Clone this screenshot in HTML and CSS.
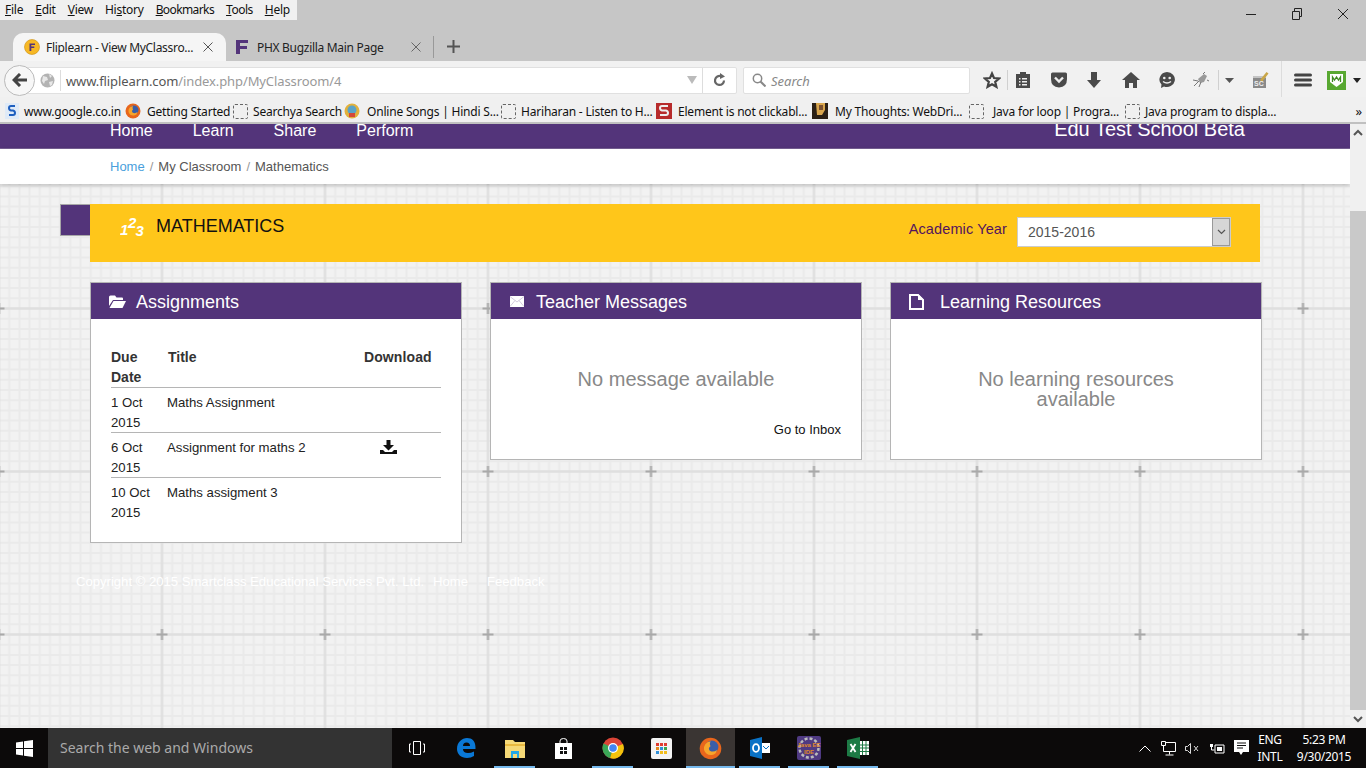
FILE: index.html
```html
<!DOCTYPE html>
<html lang="en">
<head>
<meta charset="utf-8">
<title>Fliplearn - View MyClassroom</title>
<link rel="stylesheet" href="styles.css">
</head>
<body>
<div class="titlebar">
  <nav class="menubar"><span><u>F</u>ile</span><span><u>E</u>dit</span><span><u>V</u>iew</span><span>Hi<u>s</u>tory</span><span><u>B</u>ookmarks</span><span><u>T</u>ools</span><span><u>H</u>elp</span></nav>
  <div class="winctl">
    <svg width="12" height="12" viewBox="0 0 12 12"><path d="M1 6.500h10" stroke="#222" fill="none"/></svg>
    <svg width="12" height="12" viewBox="0 0 12 12"><path d="M1.500 3.500h7v8h-7zM3.500 3.500v-3h7v8h-2" stroke="#222" fill="none"/></svg>
    <svg width="12" height="12" viewBox="0 0 12 12"><path d="M1 1l10 10M11 1L1 11" stroke="#222" fill="none"/></svg>
  </div>
</div>
<div class="tabstrip">
  <div class="tab active">
    <svg width="16" height="16" viewBox="0 0 16 16"><circle cx="8" cy="8" r="7.500" fill="#f7b825" stroke="#c98f10" stroke-width=".6"/><path d="M5.500 4.500h5.500v1.500H7.300v1.500h3v1.500h-3v3H5.500z" fill="#53347a"/></svg>
    <span class="tabtext">Fliplearn - View MyClassro...</span>
    <svg width="12" height="12" viewBox="0 0 12 12"><path d="M1.500 1.500l9 9M10.500 1.500l-9 9" stroke="#555" fill="none"/></svg>
  </div>
  <div class="tab second">
    <svg width="14" height="16" viewBox="0 0 14 16"><path d="M1 1h12v3H5v3h7v3H5v5H1z" fill="#53347a"/></svg>
    <span class="tabtext">PHX Bugzilla Main Page</span>
    <svg width="12" height="12" viewBox="0 0 12 12"><path d="M1.500 1.500l9 9M10.500 1.500l-9 9" stroke="#666" fill="none"/></svg>
  </div>
  <svg class="newtab" width="13" height="13" viewBox="0 0 13 13"><path d="M6.500 0v13M0 6.500h13" stroke="#555" stroke-width="2" fill="none"/></svg>
</div>
<div class="navbar">
  <div class="urlbar">
    <span class="backbtn"><svg width="16" height="14" viewBox="0 0 16 14"><path d="M8 1L2 7l6 6M2.500 7H15" stroke="#444" stroke-width="3" fill="none"/></svg></span>
    <svg class="globe" width="15" height="15" viewBox="0 0 15 15"><circle cx="7.500" cy="7.500" r="7" fill="#b3b3b3"/><path d="M3 3l4 1 1 3-3 1-1 3-2-3zM9 1l3 2-2 2zM9 9l4-1-1 4-2 1z" fill="#e8e8e8"/></svg>
    <span class="urltext"><b>www.fliplearn.com</b>/index.php/MyClassroom/4</span>
    <svg class="urlcaret" width="10" height="8" viewBox="0 0 10 8"><path d="M0 0h10L5 8z" fill="#bbb"/></svg>
    <span class="reload"><svg width="13" height="14" viewBox="0 0 13 14"><path d="M11 7.500A4.500 4.500 0 1 1 8 3.200" stroke="#666" stroke-width="2.200" fill="none"/><path d="M7 0l5 3.500L7 6z" fill="#666"/></svg></span>
  </div>
  <div class="searchbar">
    <svg width="14" height="14" viewBox="0 0 14 14"><circle cx="5.500" cy="5.500" r="4.200" stroke="#888" stroke-width="1.500" fill="none"/><path d="M8.500 8.500l5 5" stroke="#888" stroke-width="2" fill="none"/></svg>
    <i>Search</i>
  </div>
  <div class="tools">
    <svg width="18" height="18" viewBox="0 0 18 18"><path d="M9 2.500l2 4.500 5 .5-3.800 3.300 1.200 5L9 13.200l-4.400 2.600 1.200-5L2 7.500l5-.5z" fill="none" stroke="#444" stroke-width="2.200"/></svg>
    <i class="vsep"></i>
    <svg width="16" height="18" viewBox="0 0 16 18"><path d="M1 3h4V1h6v2h4v14H1z" fill="#4a4a4a"/><path d="M4 7h1.500v1.500H4zM7 7h5v1.500H7zM4 10h1.500v1.500H4zM7 10h5v1.500H7zM4 13h1.500v1.500H4zM7 13h5v1.500H7z" fill="#eee"/></svg>
    <svg width="18" height="16" viewBox="0 0 18 16"><path d="M1 2q0-1.500 1.500-1.500h13Q17 .5 17 2v5q0 8-8 8.500Q1 15 1 7z" fill="#4a4a4a"/><path d="M5 5.500l4 4 4-4" stroke="#eee" stroke-width="2.400" fill="none"/></svg>
    <svg width="16" height="18" viewBox="0 0 16 18"><path d="M5 1h6v8h4l-7 8-7-8h4z" fill="#4a4a4a"/></svg>
    <svg width="18" height="16" viewBox="0 0 18 16"><path d="M9 0l9 8h-3v8h-4v-5H7v5H3V8H0z" fill="#4a4a4a"/></svg>
    <svg width="18" height="18" viewBox="0 0 18 18"><path d="M9 1a8 7.500 0 1 1-3 14.500L3 17l.5-3.500A8 7.500 0 0 1 9 1z" fill="#4a4a4a"/><circle cx="6.300" cy="7" r="1.300" fill="#eee"/><circle cx="11.700" cy="7" r="1.300" fill="#eee"/><path d="M5 10.500q4 3 8 0" stroke="#eee" stroke-width="1.500" fill="none"/></svg>
    <svg class="bug" width="18" height="18" viewBox="0 0 18 18"><path d="M6 8l6-5 3 2-3 6-4 1z" fill="#999"/><path d="M2 15l5-5M1 9l5 1M7 16l2-5M11 3l2-2M15 9l2 1" stroke="#777" fill="none"/></svg>
    <i class="vsep"></i>
    <svg width="9" height="5" viewBox="0 0 9 5"><path d="M0 0h9L4.500 5z" fill="#555"/></svg>
    <svg width="17" height="18" viewBox="0 0 17 18"><path d="M1 5h13v12H1z" fill="#8a8a8a"/><path d="M1 5h13v2H1z" fill="#c4c4c4"/><path d="M8 9l6.500-8L16.500 2.500 10 11z" fill="#c9a648"/><text x="2" y="15" class="sc">SC</text></svg>
    <i class="vsep tall"></i>
    <svg width="18" height="14" viewBox="0 0 18 14"><path d="M1.500 2h15M1.500 7h15M1.500 12h15" stroke="#444" stroke-width="3" stroke-linecap="round" fill="none"/></svg>
    <svg width="19" height="19" viewBox="0 0 19 19"><path d="M0 0h19v19H0z" fill="#58a831"/><path d="M3 3h13v8l-6.500 5L3 11z" fill="#fff"/><path d="M5.500 11V6l2 3 2-3 2 3 2-3v5" stroke="#3f8a22" stroke-width="1.300" fill="none"/></svg>
    <svg width="8" height="5" viewBox="0 0 8 5"><path d="M0 0h8L4 5z" fill="#222"/></svg>
  </div>
</div>
<div class="bookmarks">
  <span class="bm"><svg width="14" height="16" viewBox="0 0 14 16"><path d="M0 0h14v16H0z" fill="#dfeaf7"/><path d="M10 3H6Q4 3 4 5t2 2.500h2q2 .5 2 2.500t-2 2H4" stroke="#1e5fbf" stroke-width="2" fill="none"/></svg>www.google.co.in</span>
  <span class="bm mid"><svg width="16" height="16" viewBox="0 0 16 16"><circle cx="8" cy="8" r="7.500" fill="#e8661c"/><circle cx="9" cy="7" r="4.500" fill="#3a5ea8"/><path d="M8 3Q3 4 3.500 9 5 13 9 12.500 12 12 12.500 9 10 11 7.500 9.500 6 8 8 6.500 7 5 8 3z" fill="#f7a52b"/></svg>Getting Started</span>
  <span class="bm"><i class="dash"></i>Searchya Search</span>
  <span class="bm wide"><svg width="16" height="16" viewBox="0 0 16 16"><circle cx="8" cy="8" r="7.500" fill="#e2b13c"/><circle cx="8" cy="7" r="4.500" fill="#5aa3c7"/><path d="M5 10h6v4H5z" fill="#d4473a"/></svg>Online Songs | Hindi S...</span>
  <span class="bm"><i class="dash"></i>Hariharan - Listen to H...</span>
  <span class="bm mid"><svg width="16" height="16" viewBox="0 0 16 16"><path d="M0 0h16v16H0z" fill="#b72b2b"/><path d="M12 3H6Q4 3 4 5t2 2.500h4q2 .5 2 2.500t-2 2H4" stroke="#eee" stroke-width="2" fill="none"/></svg>Element is not clickabl...</span>
  <span class="bm wide"><svg width="16" height="16" viewBox="0 0 16 16"><path d="M0 0h16v16H0z" fill="#2b2016"/><path d="M4 0h9v7l-3 5H5z" fill="#d9a64e"/><path d="M7 2h4v5H7z" fill="#7a5030"/></svg>My Thoughts: WebDri...</span>
  <span class="bm wider"><i class="dash"></i>Java for loop | Progra...</span>
  <span class="bm"><i class="dash"></i>Java program to displa...</span>
  <span class="chev">&raquo;</span>
</div>

<div class="viewport">
  <main class="page">
    <svg class="pattern" aria-hidden="true" width="1350" height="604">
      <defs>
        <pattern id="tile" width="163" height="163" patternUnits="userSpaceOnUse" x="-6.500" y="-1">
          <rect width="163" height="163" fill="#f2f2f2"/>
          <path d="M15.700 0v163M25.900 0v163M36.100 0v163M46.250 0v163M56.400 0v163M66.600 0v163M76.800 0v163M87 0v163M97.200 0v163M107.400 0v163M117.600 0v163M127.750 0v163M137.900 0v163M148.100 0v163M158.300 0v163M0 2.100h163M0 12.300h163M0 32.700h163M0 42.900h163M0 53.100h163M0 63.250h163M0 73.400h163M0 83.600h163M0 93.800h163M0 104h163M0 114.200h163M0 124.400h163M0 134.600h163M0 144.750h163M0 154.900h163" stroke="#eaeaea" stroke-width="2" fill="none"/>
          <path d="M5.500 0v163M0 22.500h163" stroke="#dfdfdf" stroke-width="2.500" fill="none"/>
          <path d="M5.500 17v11M0 22.500h11" stroke="#a9a9a9" stroke-width="2.200" fill="none"/>
        </pattern>
      </defs>
      <rect width="1350" height="604" fill="url(#tile)"/>
    </svg>
    <header class="sitehead">
      <nav class="mainnav"><a>Home</a><a>Learn</a><a>Share</a><a>Perform</a></nav>
      <div class="school">Edu Test School Beta</div>
    </header>
    <div class="crumbs"><a>Home</a><em>/</em><span>My Classroom</span><em>/</em><span>Mathematics</span></div>
    <div class="content">
      <section class="subject">
        <span class="flag"></span>
        <div class="subject-bar">
          <div class="subject-title">
            <svg class="onetwo" width="25" height="22" viewBox="0 0 25 22"><text x="0" y="20">1</text><text x="8" y="13">2</text><text x="15.500" y="21">3</text></svg>
            <h1>MATHEMATICS</h1>
          </div>
          <div class="year">
            <label>Academic Year</label>
            <div class="select"><span>2015-2016</span><b><svg width="9" height="6" viewBox="0 0 9 6"><path d="M1 1l3.500 3.500L8 1" stroke="#555" stroke-width="1.200" fill="none"/></svg></b></div>
          </div>
        </div>
      </section>
      <div class="cards">
        <article class="card">
          <h2><svg width="17" height="13" viewBox="0 0 17 13"><path d="M0 2q0-1.500 1.500-1.500H6L7.500 2.500H13q1 0 1 1V5H4L0 11z" fill="#fff"/><path d="M4.500 6H17l-3.500 7H.5z" fill="#fff"/></svg><span>Assignments</span></h2>
          <div class="card-body assign">
            <table>
              <thead><tr><th>Due<br>Date</th><th>Title</th><th>Download</th></tr></thead>
              <tbody>
                <tr><td>1 Oct<br>2015</td><td>Maths Assignment</td><td></td></tr>
                <tr><td>6 Oct<br>2015</td><td>Assignment for maths 2</td><td class="dl"><svg width="17" height="14" viewBox="0 0 17 14"><path d="M6.500 0h4v5H14l-5.500 5.500L3 5h3.500z" fill="#111"/><path d="M0 10h3l2 2h7l2-2h3v4H0z" fill="#111"/></svg></td></tr>
                <tr><td>10 Oct<br>2015</td><td>Maths assigment 3</td><td></td></tr>
              </tbody>
            </table>
          </div>
        </article>
        <article class="card">
          <h2><svg class="mail" width="14" height="11" viewBox="0 0 14 11"><path d="M0 0h14v11H0z" fill="#fff"/><path d="M0 .5l7 5.500 7-5.500M0 10.500l5-6M14 10.500l-5-6" stroke="#c9bfd6" stroke-width=".8" fill="none"/></svg><span>Teacher Messages</span></h2>
          <div class="card-body msg">
            <p class="empty">No message available</p>
            <a class="inbox">Go to Inbox</a>
          </div>
        </article>
        <article class="card">
          <h2><svg class="doc" width="15" height="16" viewBox="0 0 15 16"><path d="M1 1h8l5 5v9H1z" fill="none" stroke="#fff" stroke-width="2"/><path d="M9 0v6h6z" fill="#fff"/></svg><span>Learning Resources</span></h2>
          <div class="card-body msg">
            <p class="empty">No learning resources available</p>
          </div>
        </article>
      </div>
      <footer class="foot"><span>Copyright &copy; 2015 Smartclass Educational Services Pvt. Ltd.</span><a>Home</a><a>Feedback</a></footer>
    </div>
  </main>
  <aside class="scrollbar">
    <svg width="10" height="7" viewBox="0 0 10 7"><path d="M1 6l4-4 4 4" stroke="#555" stroke-width="2" fill="none"/></svg>
    <div class="thumb"></div>
    <svg width="10" height="7" viewBox="0 0 10 7"><path d="M1 1l4 4 4-4" stroke="#555" stroke-width="2" fill="none"/></svg>
  </aside>
</div>

<div class="taskbar">
  <span class="start"><svg width="17" height="17" viewBox="0 0 17 17"><path d="M0 2.500l7-1v6.500H0zM8 1.300L17 0v8H8zM0 9h7v6.500l-7-1zM8 9h9v8l-9-1.300z" fill="#fff"/></svg></span>
  <div class="cortana">Search the web and Windows</div>
  <div class="apps">
    <span><svg width="16" height="14" viewBox="0 0 16 14"><path d="M4.500 .5h7v13h-7zM2 3H.5v8H2M14 3h1.500v8H14" stroke="#fff" fill="none"/></svg></span>
    <span><svg width="20" height="20" viewBox="0 0 20 20"><path d="M1 11C1 4 6 0 11 0c5 0 9 3 8.500 11H7q0 4 5 4 3 0 6-1.500V18q-3 2-7 2C5 20 1 16 1 11zM7 8h7q0-3.500-3.500-3.500T7 8z" fill="#0a78d6"/></svg></span>
    <span class="run"><svg width="20" height="20" viewBox="0 0 20 20"><path d="M0 2h8l2 2h10v16H0z" fill="#f6d977"/><path d="M0 6h20v2H0z" fill="#e9b93f"/><path d="M6 13h8v7h-2v-4H8v4H6z" fill="#22a7e6"/></svg></span>
    <span><svg width="17" height="21" viewBox="0 0 17 21"><path d="M0 5h17v16H0z" fill="#fff"/><path d="M5 5V3q0-2.500 3.500-2.500T12 3v2" stroke="#fff" fill="none"/><path d="M5 9h3v3H5zM9 9h3v3H9zM5 13h3v3H5zM9 13h3v3H9z" fill="#111"/></svg></span>
    <span class="run"><svg width="22" height="22" viewBox="0 0 22 22"><circle cx="11" cy="11" r="10.500" fill="#db4437"/><path d="M11 11L21 7a10.500 10.500 0 0 1-13 14z" fill="#f4c20d"/><path d="M11 11l-3 10A10.500 10.500 0 0 1 1.500 6.500z" fill="#3aa757"/><circle cx="11" cy="11" r="5" fill="#fff"/><circle cx="11" cy="11" r="3.800" fill="#4285f4"/></svg></span>
    <span><svg width="21" height="21" viewBox="0 0 21 21"><rect width="21" height="21" rx="2" fill="#f3f3f3"/><path d="M5 5h3v3H5z" fill="#e03c31"/><path d="M9 5h3v3H9z" fill="#e03c31"/><path d="M13 5h3v3h-3z" fill="#e03c31"/><path d="M5 9h3v3H5z" fill="#e08a1e"/><path d="M9 9h3v3H9z" fill="#2f8fd8"/><path d="M13 9h3v3h-3z" fill="#3fa54a"/><path d="M5 13h3v3H5z" fill="#2f8fd8"/><path d="M9 13h3v3H9z" fill="#f2bd1d"/><path d="M13 13h3v3h-3z" fill="#f2bd1d"/></svg></span>
    <span class="run act"><svg width="23" height="23" viewBox="0 0 16 16"><circle cx="8" cy="8" r="7.500" fill="#e8661c"/><circle cx="9" cy="7" r="4.500" fill="#3a5ea8"/><path d="M8 3Q3 4 3.500 9 5 13 9 12.500 12 12 12.500 9 10 11 7.500 9.500 6 8 8 6.500 7 5 8 3z" fill="#f7a52b"/></svg></span>
    <span class="run"><svg width="20" height="22" viewBox="0 0 20 22"><path d="M0 3l12-3v22L0 19z" fill="#0a72c6"/><path d="M12 6h8v10h-8z" fill="#fff"/><path d="M13 9l3 3 3-3" stroke="#0a72c6" fill="none"/><ellipse cx="6" cy="11" rx="3" ry="3.800" fill="none" stroke="#fff" stroke-width="1.800"/></svg></span>
    <span class="run"><svg class="java" width="24" height="24" viewBox="0 0 24 24"><rect width="24" height="24" rx="2" fill="#4f3a82"/><circle cx="12" cy="12" r="9.500" fill="none" stroke="#bbb" stroke-width="2.500" stroke-dasharray="3 2"/><text x="12" y="11">Java EE</text><text x="12" y="18">IDE</text></svg></span>
    <span class="run"><svg width="22" height="22" viewBox="0 0 22 22"><path d="M0 3l13-3v22L0 19z" fill="#1d7a45"/><path d="M13 4h9v14h-9z" fill="#fff"/><path d="M15.500 4v14M19 4v14M13 8h9M13 11h9M13 14.500h9" stroke="#1d7a45" fill="none"/><path d="M3.500 7l5 8M8.500 7l-5 8" stroke="#fff" stroke-width="1.800" fill="none"/></svg></span>
  </div>
  <div class="tray">
    <svg width="12" height="7" viewBox="0 0 12 7"><path d="M.5 6.500L6 1l5.500 5.500" stroke="#fff" fill="none"/></svg>
    <svg width="16" height="15" viewBox="0 0 16 15"><path d="M2.500 1.500h12v9h-12zM8.500 10.500v3M4.500 14h8" stroke="#fff" fill="none"/><path d="M.5 .5h4v4h-4z" fill="#111" stroke="#fff"/></svg>
    <svg width="15" height="13" viewBox="0 0 15 13"><path d="M.5 4.500h2l3-3v10l-3-3h-2zM9 4l4 5M13 4l-4 5" stroke="#ddd" fill="none"/></svg>
    <svg width="16" height="12" viewBox="0 0 16 12"><path d="M6 3h9v8H6z" stroke="#fff" fill="none"/><path d="M8 5h5v4H8zM1 2h3v3H1z" fill="#fff"/><path d="M2.500 5v3h3" stroke="#fff" fill="none"/></svg>
    <svg width="15" height="16" viewBox="0 0 15 16"><path d="M0 0h15v12H9l-2 3-2-3H0z" fill="#fff"/><path d="M3 3h9M3 5.500h9M3 8h6" stroke="#111" fill="none"/></svg>
    <div class="lang">ENG<br>INTL</div>
    <div class="clock">5:23 PM<br>9/30/2015</div>
  </div>
</div>
</body>
</html>
```

FILE: styles.css
```css
* { box-sizing: border-box; }
html, body { margin: 0; padding: 0; }
body {
  width: 1366px; height: 768px; overflow: hidden;
  display: flex; flex-direction: column;
  font-family: "Liberation Sans", Arial, sans-serif;
  background: #c6c6c6;
}
svg { display: block; flex: none; }

/* browser chrome */
.titlebar {
  height: 20px; flex: none;
  display: flex; justify-content: space-between;
  font: 12px/20px "Noto Sans", sans-serif; color: #111;
}
.menubar { width: 297px; background: #f0f0f0; display: flex; gap: 12px; padding-left: 5px; letter-spacing: -.25px; }
.menubar span:nth-child(5) { letter-spacing: -.6px; }
.menubar span:nth-child(6) { letter-spacing: -.5px; }
.winctl { display: flex; gap: 34px; padding: 8px 17px 0 0; height: 30px; }
.tabstrip {
  height: 41px; flex: none;
  display: flex; align-items: flex-end; padding-left: 13px;
  font: 12px "Noto Sans", sans-serif; color: #222; letter-spacing: -.3px;
}
.tab { display: flex; align-items: center; }
.tab.active {
  width: 213px; height: 28px; padding: 0 12px 0 11px; gap: 6px;
  background: #f5f5f5; border-radius: 10px 10px 0 0;
}
.tab.second {
  width: 208px; height: 22px; margin-bottom: 3px; padding: 0 11px 0 9px; gap: 8px;
  border-right: 1px solid #999;
}
.tabtext { flex: 1; white-space: nowrap; }
.newtab { margin: 0 0 8px 13px; }
.navbar {
  height: 36px; flex: none; background: #f1f1f1;
  display: flex; align-items: center; padding: 2px 0 0 4px;
}
.urlbar {
  width: 733px; height: 27px; flex: none; display: flex; align-items: center;
  background: #fff; border: 1px solid #e0e0e0; border-radius: 14px 2px 2px 14px;
  font: 13px "Noto Sans", sans-serif; color: #999;
}
.backbtn {
  width: 31px; height: 31px; border-radius: 50%; margin: 0 5px 0 -1px; flex: none;
  border: 1px solid #bbb; background: #f7f7f7;
  display: flex; align-items: center; justify-content: center;
}
.globe { margin-right: 5px; }
.urltext { flex: 1; border-left: 1px solid #ddd; padding: 1px 0 0 5px; line-height: 20px; letter-spacing: -.1px; }
.urltext b { font-weight: 400; color: #555; }
.urlcaret { margin-right: 5px; }
.reload { width: 34px; height: 25px; border-left: 1px solid #ddd; display: flex; align-items: center; justify-content: center; }
.searchbar {
  width: 227px; height: 27px; flex: none; margin-left: 6px; background: #fff; border: 1px solid #e0e0e0; border-radius: 2px;
  display: flex; align-items: center; gap: 5px; padding-left: 8px;
  font: italic 13px "Noto Sans", sans-serif; color: #888;
}
.searchbar i { padding-top: 1px; }
.tools {
  flex: 1; height: 36px; display: grid;
  grid-template-columns: 31px 1px 30px 42px 28px 46px 26px 38px 1px 20px 42px 1px 42px 24px 18px;
  justify-items: center; align-items: center; padding-left: 6px;
}
.vsep { width: 1px; height: 20px; background: #d0d0d0; }
.vsep.tall { height: 36px; margin-top: -2px; background: #dcdcdc; }
.bug { margin-left: 4px; }
.sc { font: 700 7px "Liberation Sans", sans-serif; fill: #eee; }
.bookmarks {
  height: 27px; flex: none; background: #f0f0f0; border-bottom: 2px solid #c0c0c0;
  display: grid; grid-template-columns: 120px 108px 111px 157px 155px 156px 157px 156px 224px 1fr;
  padding: 3px 0 0 5px; align-items: center;
  font: 12px "Noto Sans", sans-serif; color: #111; letter-spacing: -.2px;
}
.bm { display: flex; align-items: center; gap: 5px; white-space: nowrap; }
.bm.mid { gap: 6px; }
.bm.wide { gap: 7px; }
.bm.wider { gap: 9px; }
.dash { width: 15px; height: 15px; border: 1px dashed #666; border-radius: 2px; flex: none; }
.chev { font-size: 13px; justify-self: end; padding-right: 4px; }

/* page */
.viewport { flex: 1; display: flex; min-height: 0; }
.page { flex: 1; min-width: 0; position: relative; overflow: hidden; }
.pattern { position: absolute; inset: 0; z-index: 0; }
.sitehead {
  position: relative; height: 25px; background: #53347a; color: #fff;
  border-bottom: 1px solid #7a6297; overflow: hidden;
  display: flex; justify-content: space-between; align-items: flex-end;
  padding: 0 105px 0 110px;
}
.mainnav { display: flex; gap: 40px; font-size: 16px; line-height: 18px; align-self: flex-start; margin-top: -2px; }
.school { font-size: 20px; line-height: 22px; margin-bottom: 8px; }
.crumbs {
  position: relative; height: 35px; background: #fff; box-shadow: 0 1px 4px rgba(0,0,0,.25);
  display: flex; align-items: center; padding-left: 110px; gap: 5px;
  font-size: 13px; color: #555;
}
.crumbs a { color: #4a9fdc; }
.crumbs em { font-style: normal; color: #999; }
.content { position: relative; padding: 20px 0 0 60px; }
.subject { display: flex; align-items: flex-start; width: 1200px; }
.flag { width: 30px; height: 32px; background: #53347a; border: 1px solid #a8a8a8; border-right: 0; flex: none; }
.subject-bar {
  flex: 1; height: 58px; background: #ffc61a;
  display: flex; justify-content: space-between;
  padding: 0 29px 0 30px;
}
.subject-title { display: flex; gap: 11px; padding-top: 11px; align-items: flex-start; }
.onetwo text { font: italic 700 15px "Liberation Sans", sans-serif; fill: #fff; }
.subject-title h1 { margin: 0; font-size: 18px; font-weight: 400; color: #111; line-height: 22px; }
.year { display: flex; padding-top: 13px; gap: 10px; align-items: flex-start; }
.year label { font-size: 14.5px; line-height: 24px; color: #53145e; letter-spacing: .12px; }
.select {
  width: 214px; height: 30px; background: #fff; border: 1px solid #ccc;
  display: flex; justify-content: space-between;
  font-size: 14px; color: #555;
}
.select span { padding: 0 0 0 10px; line-height: 28px; }
.select b { width: 18px; background: #d6d6d6; border: 1px solid #999; display: flex; align-items: center; justify-content: center; }
.cards { display: flex; gap: 28px; margin: 20px 0 0 30px; align-items: flex-start; }
.card { width: 372px; background: #fff; border: 1px solid #b5b5b5; }
.card h2 {
  margin: 0; height: 36px; background: #53347a; color: #fff;
  font-size: 18px; font-weight: 400; line-height: 34px;
  display: flex; align-items: center; padding: 1px 0 0 18px; gap: 10px;
}
.card h2 .mail { margin: 0 2px 0 1px; }
.card h2 .doc { margin: 0 6px 0 0; }
.card-body.assign { padding: 18px 20px 20px; height: 223px; }
table { width: 100%; border-collapse: collapse; font-size: 13.2px; color: #222; table-layout: fixed; }
th { text-align: left; font-size: 14px; line-height: 20px; vertical-align: top; color: #333; }
thead th { border-bottom: 1px solid #b5b5b5; height: 50px; padding: 10px 0 0 0; }
th:nth-child(1), td:nth-child(1) { width: 56px; }
th:nth-child(2) { padding-left: 1px; }
th:nth-child(3), td:nth-child(3) { width: 77px; letter-spacing: .1px; }
td { line-height: 19.5px; padding: 5px 0 0; vertical-align: top; height: 44px; }
tbody tr { border-bottom: 1px solid #b5b5b5; }
tbody tr:last-child { border-bottom: 0; }
td.dl { padding-top: 7px; padding-left: 16px; }
.card-body.msg { height: 140px; position: relative; text-align: center; }
.empty { margin: 0; padding: 50px 80px 0; font-size: 20px; line-height: 20px; color: #888; }
.inbox { position: absolute; right: 20px; bottom: 21px; font-size: 13px; line-height: 16px; color: #111; }
.foot { margin: 31px 0 0 16px; display: flex; font-size: 13.1px; color: #fff; line-height: 16px; }
.foot a { margin-left: 19px; }
.foot a:first-of-type { margin-left: 9px; }

/* scrollbar */
.scrollbar { width: 16px; flex: none; background: #f0f0f0; display: flex; flex-direction: column; align-items: center; padding-top: 5px; }
.thumb { width: 16px; height: 499px; background: #c9c9c9; margin: 75px 0 6px; }

/* taskbar */
.taskbar {
  height: 40px; flex: none; background: #0c0a0a; color: #fff;
  display: flex; align-items: center;
}
.start { width: 48px; height: 40px; padding-left: 16px; display: flex; align-items: center; }
.cortana { width: 344px; height: 40px; background: #333; color: #aaa; font: 14px/40px "Noto Sans", sans-serif; padding-left: 12px; }
.apps { display: flex; }
.apps span { width: 49px; height: 40px; display: flex; align-items: center; justify-content: center; position: relative; }
.apps span.run::after { content: ""; position: absolute; left: 4px; right: 4px; bottom: 0; height: 2px; background: #76b9ed; }
.apps span.act { background: #3a3533; }
.apps span.act::after { left: 0; right: 0; }
.java text { font: 700 6px "Liberation Sans", sans-serif; fill: #e08a2a; text-anchor: middle; }
.tray {
  flex: 1; display: grid; justify-content: end; justify-items: center; align-items: center;
  grid-template-columns: 26px 22px 24px 25px 24px 34px 74px; padding-right: 5px;
  font: 12px/17px "Noto Sans", sans-serif;
}
.lang { text-align: center; letter-spacing: -.3px; }
.clock { text-align: center; letter-spacing: -.3px; }
```
